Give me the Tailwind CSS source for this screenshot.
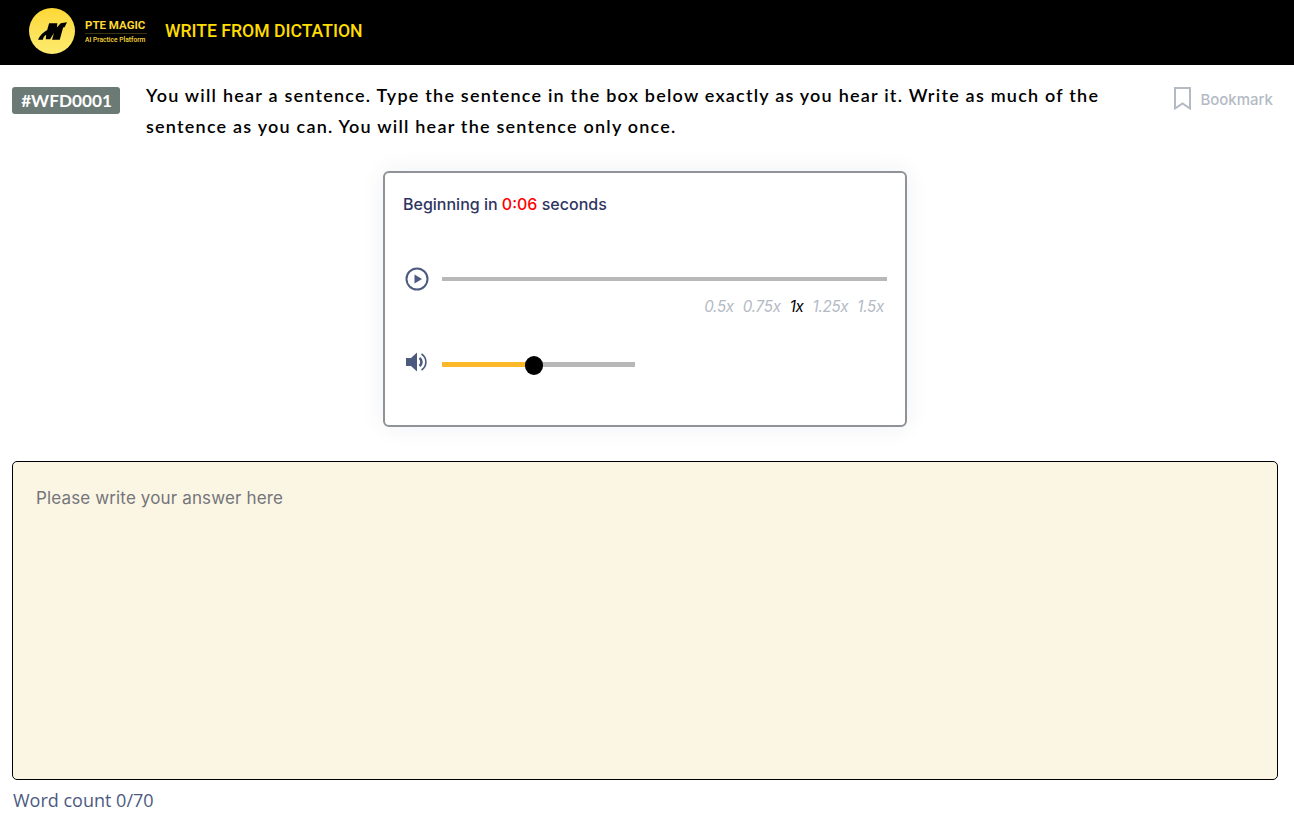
<!DOCTYPE html>
<html lang="en">
<head>
    <meta charset="UTF-8">
    <meta name="viewport" content="width=device-width, initial-scale=1.0">
    <title>Write From Dictation</title>
    <script src="https://cdn.jsdelivr.net/npm/@tailwindcss/browser@4"></script>
</head>
<body class="bg-white font-['Lato',sans-serif] h-[823px] overflow-hidden">

    <!-- Header -->
    <header class="bg-black h-[65px] flex items-center pl-[29px] pb-[3px]">
        <div class="w-[46px] h-[46px] rounded-full bg-gradient-to-b from-[#fdd835] to-[#fdeb6e] flex items-center justify-center">
            <svg viewBox="0 0 30 18" class="w-[29px] h-[18px]" fill="#000">
                <path d="M0 18 C2 13 6 10 9.5 8 L11.5 1 L20 1 L19.5 5.5 L23.5 1 L30 0 L27.5 5 L26 5.5 L22.5 18 L14.5 18 L16.5 11 L12.5 17.5 L8 17.5 L8.5 13 C6.5 14 5.5 16 5 18 Z"/>
            </svg>
        </div>
        <div class="ml-[10px] w-[62px] flex flex-col items-start">
            <span class="text-[11.5px] leading-[14px] font-bold text-[#fdd835] whitespace-nowrap font-['Roboto',sans-serif]">PTE MAGIC</span>
            <span class="w-full border-t border-[#3a3410] mt-px pt-[2px] text-[6.7px] leading-[8px] font-medium text-[#fdd835] whitespace-nowrap font-['Roboto',sans-serif]">AI Practice Platform</span>
        </div>
        <h1 class="ml-[18px] text-[17.6px] leading-[24px] font-medium text-[#ffdd00] font-['Roboto',sans-serif]">WRITE FROM DICTATION</h1>
    </header>

    <main class="w-[1290px] px-3">
        <!-- Question row -->
        <div class="flex items-start pt-[15px]">
            <div class="mt-[7px] w-[108px] h-[27px] shrink-0 bg-[#6c7a76] rounded-[3px] text-white text-[17.2px] leading-[27px] font-bold text-center pl-px">#WFD0001</div>
            <p class="ml-[26px] w-[1000px] text-[18px] leading-[31px] font-semibold text-black tracking-[1.22px]">You will hear a sentence. Type the sentence in the box below exactly as you hear it. Write as much of the sentence as you can. You will hear the sentence only once.</p>
            <div class="ml-auto mr-[5px] mt-[4px] flex items-center gap-[9px] text-[#b4bac4]">
                <svg viewBox="0 0 17 23" class="w-[17px] h-[23px]" fill="none" stroke="#b4bac4" stroke-width="2"><path d="M1 1 H16 V21.5 L8.5 16.5 L1 21.5 Z"/></svg>
                <span class="text-[15px] leading-[24px] font-medium font-['Inter',sans-serif] mt-[4px]">Bookmark</span>
            </div>
        </div>

        <!-- Audio card -->
        <section class="w-[524px] h-[256px] mx-auto mt-[29px] border-2 border-[#8f9296] rounded-[6px] bg-white shadow-[0_0_24px_rgba(30,40,90,0.07)] pl-[19px] pr-[18px] pt-[19px]">
            <p class="-ml-px text-[16px] leading-[24px] font-medium text-[#2f3561] font-['Inter',sans-serif]">Beginning in <span class="text-[#ff0000]">0:06</span> seconds</p>
            <div class="flex items-center gap-[13px] mt-[51px]">
                <svg viewBox="0 0 24 24" class="w-[24px] h-[24px] shrink-0 ml-px" fill="none">
                    <circle cx="12" cy="12" r="10.5" stroke="#4c5a7f" stroke-width="2"/>
                    <path d="M9.5 7.5 L17 12 L9.5 16.5 Z" fill="#4c5a7f"/>
                </svg>
                <div class="h-[4px] flex-1 bg-[#b8b8b8]"></div>
            </div>
            <div class="flex justify-end gap-[9px] pr-[3px] mt-[6px] text-[15.2px] leading-[20px] italic text-[#b4bac4] font-['Inter',sans-serif] tracking-[-0.3px]">
                <span>0.5x</span><span>0.75x</span><span class="text-black">1x</span><span>1.25x</span><span>1.5x</span>
            </div>
            <div class="flex items-center gap-[14px] mt-[33px]">
                <svg viewBox="0 0 24 24" class="w-[24px] h-[24px] shrink-0" fill="none">
                    <path d="M2 8 H7 L13 2.5 V21.5 L7 16 H2 Z" fill="#4c5a7f"/>
                    <path d="M15.5 8 A5 5 0 0 1 15.5 16" stroke="#4c5a7f" stroke-width="2.6"/>
                    <path d="M17.5 4 A9.5 9.5 0 0 1 17.5 20" stroke="#4c5a7f" stroke-width="1.6"/>
                </svg>
                <div class="relative w-[193px] h-[5px] bg-[#b8b8b8] mt-[4px]">
                    <div class="h-full w-[90px] bg-[#fbb92a]"></div>
                    <div class="absolute left-[83px] top-[-6px] w-[18px] h-[19px] rounded-full bg-black"></div>
                </div>
            </div>
        </section>

        <!-- Answer -->
        <div class="mt-[34px] h-[319px] border border-black rounded-[5px] bg-[#fbf5e4] px-[23px] pt-[24px]">
            <p class="text-[17px] leading-[24px] tracking-[0.14px] text-[#74767a] font-['Inter',sans-serif]">Please write your answer here</p>
        </div>
        <p class="mt-[8px] ml-px text-[18px] leading-[24px] text-[#4c5a7f] font-['Open_Sans',sans-serif]">Word count 0/70</p>
    </main>
</body>
</html>
